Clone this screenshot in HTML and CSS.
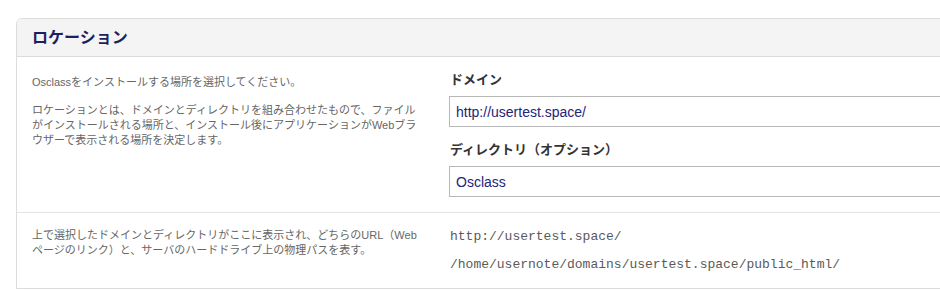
FILE: index.html
```html
<!DOCTYPE html>
<html lang="ja">
<head>
  <meta charset="UTF-8" />
  <title>ロケーション</title>
  <link rel="stylesheet" href="styles.css">
</head>
<body>
  <div class="panel">
    <div class="panel-head">ロケーション</div>

    <div class="row row-location">
      <div class="help">
        <p>Osclassをインストールする場所を選択してください。</p>
        <p>ロケーションとは、ドメインとディレクトリを組み合わせたもので、ファイルがインストールされる場所と、インストール後にアプリケーションがWebブラウザーで表示される場所を決定します。</p>
      </div>
      <div class="fields">
        <label class="field-label">ドメイン</label>
        <input class="field" type="text" value="http://usertest.space/">
        <label class="field-label">ディレクトリ（オプション）</label>
        <input class="field" type="text" value="Osclass">
      </div>
    </div>

    <div class="row row-paths">
      <div class="help">
        <p>上で選択したドメインとディレクトリがここに表示され、どちらのURL（Webページのリンク）と、サーバのハードドライブ上の物理パスを表す。</p>
      </div>
      <div class="paths">
        <div>http://usertest.space/</div>
        <div>/home/usernote/domains/usertest.space/public_html/</div>
      </div>
    </div>
  </div>
</body>
</html>
```

FILE: styles.css
```css
html, body {
  margin: 0;
  overflow: hidden;
}

body {
  font-family: "Liberation Sans", "Noto Sans CJK JP", sans-serif;
  background: #ffffff;
  padding: 18px 0 0 16px;
}

.panel {
  width: 1000px;
  border: 1px solid #dcdcdc;
  border-radius: 6px 0 0 0;
}

.panel-head {
  background: #f4f4f4;
  border-bottom: 1px solid #dcdcdc;
  border-radius: 6px 0 0 0;
  height: 37px;
  line-height: 37px;
  padding: 0 15px;
  font-size: 16px;
  font-weight: bold;
  color: #1f1f5e;
}

.row {
  display: grid;
  grid-template-columns: 432px 1fr;
}

.row-location {
  border-bottom: 1px solid #e3e3e3;
}

.help {
  padding: 0 27px 0 15px;
  font-size: 11px;
  line-height: 15px;
  color: #666666;
}

.help p {
  margin: 0 0 13px;
}

.row-location .help {
  padding-top: 18px;
}

.row-paths .help {
  padding-top: 15px;
  padding-bottom: 30px;
}

.row-paths .help p {
  margin: 0;
}

.fields {
  display: flex;
  flex-direction: column;
  padding: 14px 0 15px;
}

.field-label {
  font-size: 13px;
  font-weight: bold;
  color: #333333;
  line-height: 18px;
  margin: 0 0 7px 1px;
}

.field {
  box-sizing: border-box;
  height: 31px;
  border: 1px solid #b8b8b8;
  padding: 0 6px;
  font-family: "Liberation Sans", sans-serif;
  font-size: 14px;
  color: #24247a;
  margin-bottom: 14px;
}

.field:last-child {
  margin-bottom: 0;
}

.paths {
  padding-top: 16px;
  font-family: "Liberation Mono", monospace;
  font-size: 13px;
  color: #5a5a5a;
  line-height: 16px;
}

.paths div {
  margin-bottom: 12px;
  padding-left: 1px;
}
```
